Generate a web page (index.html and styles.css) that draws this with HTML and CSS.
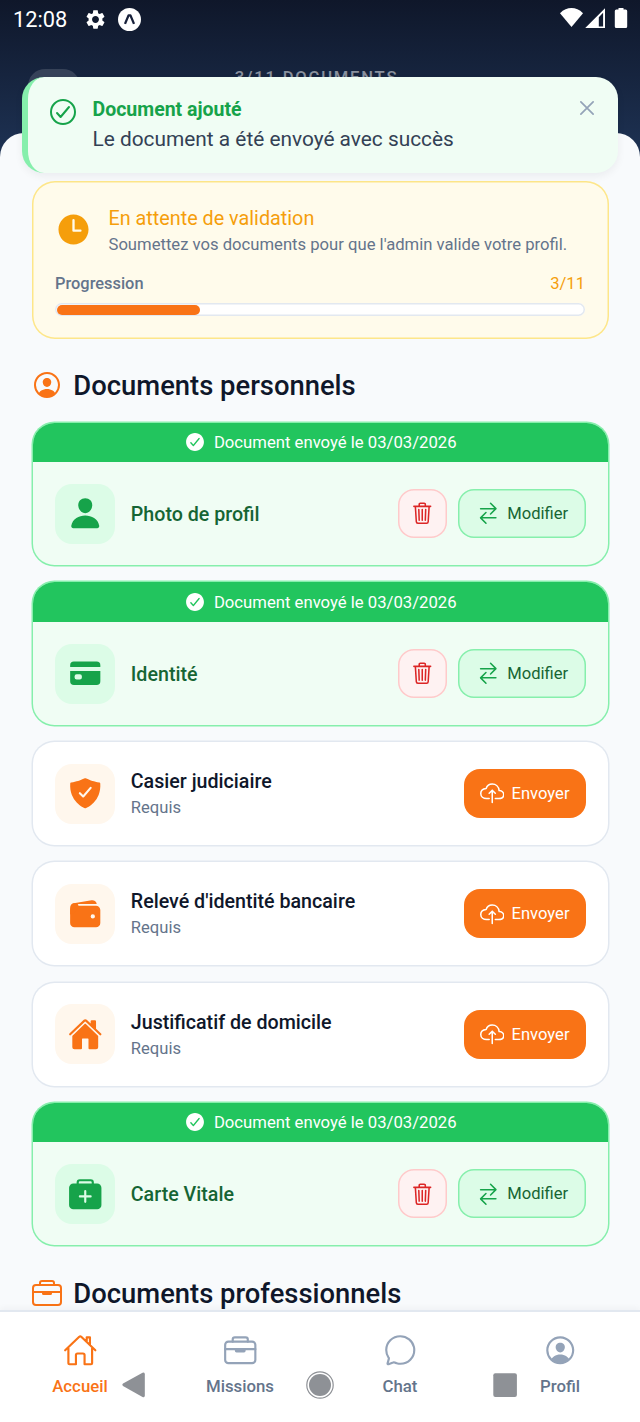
FILE: index.html
```html
<!DOCTYPE html>
<html lang="fr">
<head>
<meta charset="utf-8">
<meta name="viewport" content="width=device-width, initial-scale=1">
<title>Documents</title>
<link rel="stylesheet" href="styles.css">
</head>
<body>
<svg class="sprite" aria-hidden="true">
  <symbol id="check-outline" viewBox="0 0 512 512"><path class="line" d="M448 256c0-106-86-192-192-192S64 150 64 256s86 192 192 192 192-86 192-192zM352 176L217.600 336 160 272"/></symbol>
  <symbol id="close" viewBox="0 0 512 512"><path class="line" d="M368 368L144 144M368 144L144 368"/></symbol>
  <symbol id="time" viewBox="0 0 512 512"><path d="M256 48C141.130 48 48 141.130 48 256s93.130 208 208 208 208-93.130 208-208S370.870 48 256 48zm96 240h-96a16 16 0 01-16-16V128a16 16 0 0132 0v128h80a16 16 0 010 32z"/></symbol>
  <symbol id="person-circle" viewBox="0 0 512 512"><path d="M258.900 48C141.920 46.420 46.420 141.920 48 258.900c1.560 112.190 92.910 203.540 205.100 205.100 117 1.600 212.480-93.900 210.880-210.880C462.440 140.910 371.090 49.560 258.900 48zM385.320 375.250a4 4 0 01-6.140-.32 124.270 124.270 0 00-32.350-29.590C321.370 329 289.110 320 256 320s-65.370 9-90.830 25.340a124.240 124.240 0 00-32.350 29.580 4 4 0 01-6.140.32A175.320 175.320 0 0180 259c-1.630-97.310 78.220-178.760 175.570-179S432 158.810 432 256a175.320 175.320 0 01-46.680 119.250z"/><path d="M256 144c-19.720 0-37.550 7.390-50.220 20.820s-19 32-17.570 51.930C191.110 256 221.520 288 256 288s64.830-32 67.790-71.240c1.480-19.740-4.800-38.140-17.680-51.820C293.390 151.440 275.590 144 256 144z"/></symbol>
  <symbol id="check-circle" viewBox="0 0 512 512"><path d="M256 48C141.310 48 48 141.310 48 256s93.310 208 208 208 208-93.310 208-208S370.690 48 256 48zm108.250 138.290l-134.400 160a16 16 0 01-12 5.710h-.27a16 16 0 01-11.890-5.300l-57.600-64a16 16 0 1123.780-21.400l45.290 50.320 122.590-145.910a16 16 0 0124.500 20.580z"/></symbol>
  <symbol id="person" viewBox="0 0 512 512"><path d="M332.640 64.580C313.180 43.570 286 32 256 32c-30.160 0-57.430 11.500-76.800 32.380-19.580 21.110-29.120 49.800-26.880 80.780C156.760 206.280 203.270 256 256 256s99.160-49.710 103.670-110.820c2.270-30.700-7.330-59.330-27.030-80.600zM432 480H80a31 31 0 01-24.200-11.130c-6.500-7.770-9.120-18.380-7.180-29.110C57.060 392.940 83.400 353.610 124.800 326c36.780-24.510 83.370-38 131.200-38s94.420 13.500 131.200 38c41.400 27.600 67.740 66.930 76.180 113.750 1.940 10.730-.68 21.340-7.180 29.110A31 31 0 01432 480z"/></symbol>
  <symbol id="card" viewBox="0 0 512 512"><path d="M32 376a56 56 0 0056 56h336a56 56 0 0056-56V222H32zm66-76a30 30 0 0130-30h48a30 30 0 0130 30v20a30 30 0 01-30 30h-48a30 30 0 01-30-30zM424 80H88a56 56 0 00-56 56v26h448v-26a56 56 0 00-56-56z"/></symbol>
  <symbol id="shield" viewBox="0 0 512 512"><path d="M479.070 111.360a16 16 0 00-13.150-14.740c-86.500-15.520-122.610-26.740-203.330-63.200a16 16 0 00-13.180 0C168.690 69.880 132.580 81.100 46.080 96.620a16 16 0 00-13.150 14.740c-3.850 61.110 4.360 118.050 24.430 169.240A349.470 349.470 0 00129 393.110c53.470 56.730 110.240 81.370 121.070 85.730a16 16 0 0012 0c10.830-4.360 67.600-29 121.070-85.730A349.470 349.470 0 00454.640 280.600c20.070-51.190 28.280-108.130 24.430-169.240zm-131 75.110l-110.800 128a16 16 0 01-11.410 5.530h-.66a16 16 0 01-11.200-4.570l-49.200-48.200a16 16 0 1122.400-22.860l37 36.290 99.700-115.130a16 16 0 0124.170 20.940z"/></symbol>
  <symbol id="wallet" viewBox="0 0 512 512"><path d="M95.500 104h320a87.730 87.730 0 0111.180.71 66 66 0 00-77.510-55.560L86 94.080h-.3a66 66 0 00-41.070 26.130A87.570 87.570 0 0195.500 104zM415.500 128h-320a64.070 64.070 0 00-64 64v192a64.070 64.070 0 0064 64h320a64.070 64.070 0 0064-64V192a64.070 64.070 0 00-64-64zM368 320a32 32 0 1132-32 32 32 0 01-32 32z"/><path d="M32 259.500V160c0-21.670 12-58 53.650-65.870C121 87.500 156 87.500 156 87.500s23 16 4 16-18.500 24.500 0 24.500 0 23.500 0 23.500L85.500 236z"/></symbol>
  <symbol id="home" viewBox="0 0 512 512"><path d="M261.560 101.280a8 8 0 00-11.060 0L66.400 277.150a8 8 0 00-2.470 5.790L63.900 448a32 32 0 0032 32H192a16 16 0 0016-16V328a8 8 0 018-8h80a8 8 0 018 8v136a16 16 0 0016 16h96.060a32 32 0 0032-32V282.940a8 8 0 00-2.470-5.790z"/><path d="M490.910 244.150l-74.800-71.560V64a16 16 0 00-16-16h-48a16 16 0 00-16 16v32l-57.920-55.380C272.770 35.140 264.710 32 256 32c-8.680 0-16.720 3.140-22.140 8.630l-212.700 203.500c-6.220 6-7 15.870-1.340 22.370A16 16 0 0043 267.560L250.500 69.280a8 8 0 0111.060 0l207.520 198.280a16 16 0 0022.590-.44c6.140-6.360 5.630-16.860-.76-22.970z"/></symbol>
  <symbol id="medkit" viewBox="0 0 512 512"><rect x="16" y="96" width="480" height="384" rx="64"/><path class="line" d="M144 112V80a32 32 0 0132-32h160a32 32 0 0132 32v32"/><path class="line plus" d="M256 208v160M336 288H176"/></symbol>
  <symbol id="trash" viewBox="0 0 512 512"><path class="line" d="M112 112l20 320c.95 18.490 14.400 32 32 32h184c18 0 30.870-13.510 32-32l20-320M80 112h352M192 112V72a23.930 23.930 0 0124-24h80a23.930 23.930 0 0124 24v40M256 176v224M184 176l8 224M328 176l-8 224"/></symbol>
  <symbol id="swap" viewBox="0 0 512 512"><path class="line" d="M304 48l112 112-112 112M398.870 160H96M208 464L96 352l112-112M114 352h302"/></symbol>
  <symbol id="upload" viewBox="0 0 512 512"><path class="line" d="M320 367.790h76c55 0 100-29.210 100-83.600s-53-81.470-96-83.600c-8.890-85.060-71-136.800-144-136.800-69 0-113.440 45.790-128 91.200-60 5.700-112 43.880-112 106.400s54 106.400 120 106.400h56M320 255.790l-64-64-64 64M256 448.210V207.790"/></symbol>
  <symbol id="home-outline" viewBox="0 0 512 512"><path class="line" d="M80 212v236a16 16 0 0016 16h96V328a24 24 0 0124-24h80a24 24 0 0124 24v136h96a16 16 0 0016-16V212M480 256L266.890 52c-5-5.280-16.690-5.340-21.780 0L32 256M400 179V64h-48v69"/></symbol>
  <symbol id="briefcase" viewBox="0 0 512 512"><rect class="line" x="32" y="128" width="448" height="320" rx="48"/><path class="line" d="M144 128V96a32 32 0 0132-32h160a32 32 0 0132 32v32M480 240H32"/><path class="line clasp" d="M320 240v24a8 8 0 01-8 8H200a8 8 0 01-8-8v-24"/></symbol>
  <symbol id="chat" viewBox="0 0 512 512"><path class="line" d="M87.490 380c1.190-4.380-1.440-10.470-3.950-14.860a44.860 44.860 0 00-2.540-3.800 199.810 199.810 0 01-33-110C47.650 139.090 140.730 48 255.830 48 356.210 48 440 117.540 459.580 209.850a199 199 0 014.420 41.640c0 112.410-89.490 204.930-204.590 204.930-18.300 0-43-4.600-56.470-8.370s-26.920-8.770-30.390-10.110a31.090 31.090 0 00-11.120-2.070 30.710 30.710 0 00-12.090 2.430l-67.830 24.480a16 16 0 01-4.670 1.220 9.600 9.600 0 01-9.570-9.740 15.850 15.850 0 01.6-3.290z"/></symbol>
  <symbol id="gear" viewBox="0 0 24 24"><path d="M19.140 12.940c.04-.3.06-.61.06-.94 0-.32-.02-.64-.07-.94l2.030-1.580c.18-.14.23-.41.12-.61l-1.920-3.320c-.12-.22-.37-.29-.59-.22l-2.390.96c-.5-.38-1.030-.7-1.620-.94l-.36-2.540c-.04-.24-.24-.41-.48-.41h-3.840c-.24 0-.43.17-.47.41l-.36 2.540c-.59.24-1.130.57-1.620.94l-2.390-.96c-.22-.08-.47 0-.59.22L2.740 8.870c-.12.21-.08.47.12.61l2.030 1.580c-.05.3-.09.63-.09.94s.02.64.07.94l-2.030 1.580c-.18.14-.23.41-.12.61l1.920 3.320c.12.22.37.29.59.22l2.390-.96c.5.38 1.030.7 1.620.94l.36 2.540c.05.24.24.41.48.41h3.840c.24 0 .44-.17.47-.41l.36-2.540c.59-.24 1.130-.56 1.620-.94l2.390.96c.22.08.47 0 .59-.22l1.920-3.320c.12-.22.07-.47-.12-.61l-2.010-1.580zM12 15.600c-1.980 0-3.600-1.620-3.600-3.600s1.620-3.600 3.600-3.600 3.600 1.620 3.600 3.600-1.620 3.600-3.600 3.600z"/></symbol>
</svg>

<div class="screen">
  <header class="hero">
    <div class="status">
      <span class="clock">12:08</span>
      <svg class="s-gear"><use href="#gear"/></svg>
      <svg class="s-app" viewBox="0 0 24 24"><circle cx="12" cy="12" r="12"/><path d="M7.300 16.600L11 7.700h2l3.700 8.900" /></svg>
      <svg class="s-signal" viewBox="0 0 68 22"><path d="M0 5.200C7-1.600 16-1.600 23 5.200L11.500 19z"/><path fill-rule="evenodd" d="M45 .2V20H25.200zM38.800 9.200V18.400h4.300V4.800z"/><path d="M58.500 0h5v1.500h2.200q1.500 0 1.500 1.500v15.600q0 1.500-1.500 1.500h-9.400q-1.500 0-1.500-1.500V3q0-1.500 1.500-1.500h2.200z"/></svg>
    </div>
    <div class="hero-bar">
      <span class="back"></span>
      <span class="count">3/11 DOCUMENTS</span>
      <span class="spacer"></span>
    </div>
  </header>

  <main class="sheet">
    <section class="notice">
      <div class="notice-head">
        <svg class="i-time"><use href="#time"/></svg>
        <div>
          <h2 class="notice-title">En attente de validation</h2>
          <p class="notice-text">Soumettez vos documents pour que l'admin valide votre profil.</p>
        </div>
      </div>
      <div class="progress-row"><span class="progress-label">Progression</span><span class="progress-value">3/11</span></div>
      <div class="track"><div class="fill" style="width:27.27%"></div></div>
    </section>

    <h1 class="section-title"><svg class="i-head"><use href="#person-circle"/></svg>Documents personnels</h1>

    <div class="list">
      <article class="doc done">
        <div class="band"><svg class="i-band"><use href="#check-circle"/></svg>Document envoyé le 03/03/2026</div>
        <div class="row">
          <span class="tile"><svg class="i-tile"><use href="#person"/></svg></span>
          <div class="info"><h3 class="name">Photo de profil</h3></div>
          <button class="btn delete" aria-label="Supprimer"><svg class="i-btn"><use href="#trash"/></svg></button>
          <button class="btn edit"><svg class="i-btn"><use href="#swap"/></svg>Modifier</button>
        </div>
      </article>
      <article class="doc done">
        <div class="band"><svg class="i-band"><use href="#check-circle"/></svg>Document envoyé le 03/03/2026</div>
        <div class="row">
          <span class="tile"><svg class="i-tile"><use href="#card"/></svg></span>
          <div class="info"><h3 class="name">Identité</h3></div>
          <button class="btn delete" aria-label="Supprimer"><svg class="i-btn"><use href="#trash"/></svg></button>
          <button class="btn edit"><svg class="i-btn"><use href="#swap"/></svg>Modifier</button>
        </div>
      </article>
      <article class="doc">
        <div class="row">
          <span class="tile"><svg class="i-tile"><use href="#shield"/></svg></span>
          <div class="info"><h3 class="name">Casier judiciaire</h3><p class="need">Requis</p></div>
          <button class="btn send"><svg class="i-btn"><use href="#upload"/></svg>Envoyer</button>
        </div>
      </article>
      <article class="doc">
        <div class="row">
          <span class="tile"><svg class="i-tile"><use href="#wallet"/></svg></span>
          <div class="info"><h3 class="name">Relevé d'identité bancaire</h3><p class="need">Requis</p></div>
          <button class="btn send"><svg class="i-btn"><use href="#upload"/></svg>Envoyer</button>
        </div>
      </article>
      <article class="doc">
        <div class="row">
          <span class="tile"><svg class="i-tile"><use href="#home"/></svg></span>
          <div class="info"><h3 class="name">Justificatif de domicile</h3><p class="need">Requis</p></div>
          <button class="btn send"><svg class="i-btn"><use href="#upload"/></svg>Envoyer</button>
        </div>
      </article>
      <article class="doc done">
        <div class="band"><svg class="i-band"><use href="#check-circle"/></svg>Document envoyé le 03/03/2026</div>
        <div class="row">
          <span class="tile"><svg class="i-tile"><use href="#medkit"/></svg></span>
          <div class="info"><h3 class="name">Carte Vitale</h3></div>
          <button class="btn delete" aria-label="Supprimer"><svg class="i-btn"><use href="#trash"/></svg></button>
          <button class="btn edit"><svg class="i-btn"><use href="#swap"/></svg>Modifier</button>
        </div>
      </article>
    </div>

    <h1 class="section-title"><svg class="i-head"><use href="#briefcase"/></svg>Documents professionnels</h1>
  </main>

  <nav class="tabs">
    <a class="tab active"><svg class="i-tab"><use href="#home-outline"/></svg>Accueil</a>
    <a class="tab"><svg class="i-tab"><use href="#briefcase"/></svg>Missions</a>
    <a class="tab"><svg class="i-tab"><use href="#chat"/></svg>Chat</a>
    <a class="tab"><svg class="i-tab"><use href="#person-circle"/></svg>Profil</a>
  </nav>

  <!-- System navigation keys drawn over the tab bar -->
  <div class="keys">
    <svg class="key" viewBox="0 0 30 30"><path d="M4 13.500Q2.500 14.800 4 16.100L23.500 27Q25.800 28 25.800 25.500V4.200Q25.800 1.700 23.500 2.800z"/></svg>
    <svg class="key" viewBox="0 0 30 30"><circle class="ring" cx="15" cy="15" r="13.200"/><circle cx="15" cy="15" r="11"/></svg>
    <svg class="key" viewBox="0 0 30 30"><rect x="3.300" y="3.300" width="23.600" height="23.600" rx="2"/></svg>
  </div>

  <div class="toast" role="status">
    <svg class="i-toast"><use href="#check-outline"/></svg>
    <div class="toast-body">
      <strong class="toast-title">Document ajouté</strong>
      <p class="toast-text">Le document a été envoyé avec succès</p>
    </div>
    <svg class="i-close"><use href="#close"/></svg>
  </div>
</div>
</body>
</html>
```
FILE: styles.css
```css
* { box-sizing: border-box; margin: 0; }

body {
  background: #f8fafc;
  font-family: Roboto, "Noto Sans", sans-serif;
  font-size: 16.6px;
  color: #0f172a;
}

svg { display: block; flex: none; fill: currentColor; }
.sprite { position: absolute; width: 0; height: 0; }
.line {
  fill: none;
  stroke: currentColor;
  stroke-width: 32;
  stroke-linecap: round;
  stroke-linejoin: round;
}
.plus { stroke: #dcfce7; }
.clasp { fill: currentColor; }

.screen {
  position: relative;
  display: flex;
  flex-direction: column;
  width: 640px;
  height: 1422px;
  overflow: hidden;
}

/* Header */
.hero {
  flex: none;
  height: 160px;
  background: linear-gradient(#0f172a, #1e3355);
  color: #fff;
}
.status {
  display: flex;
  align-items: center;
  height: 38px;
  padding: 0 12px 0 13px;
}
.clock { width: 71px; font-size: 21.8px; }
.s-gear { width: 23px; height: 23px; }
.s-app { width: 23px; height: 23px; margin-left: 11px; }
.s-app path { fill: none; stroke: #17203a; stroke-width: 2.4; stroke-linejoin: round; }
.s-signal { width: 68px; height: 22px; margin-left: auto; }
.hero-bar {
  display: flex;
  justify-content: space-between;
  padding: 31px 31px 0 28px;
}
.back, .spacer { width: 52px; height: 52px; }
.spacer { width: 56px; }
.back { border-radius: 17px; background: rgba(255, 255, 255, .14); }
.count { font-weight: 500; letter-spacing: 1.8px; line-height: 17px; color: rgba(255, 255, 255, .5); }

/* Content sheet */
.sheet {
  flex: 1;
  min-height: 0;
  margin-top: -27px;
  padding: 48px 31.5px 0;
  overflow: hidden;
  border-radius: 24px 24px 0 0;
  background: #f8fafc;
}

.notice {
  height: 158px;
  padding: 25px 23.5px 0;
  border-radius: 23px;
  background: #fffbeb;
  box-shadow: inset 0 0 0 1.5px #fde68a;
}
.notice-head { display: flex; align-items: center; gap: 16.5px; color: #f59e0b; }
.i-time { width: 37px; height: 37px; margin-bottom: 6px; }
.notice-title { font-size: 19.8px; font-weight: 400; line-height: 26px; }
.notice-text { font-size: 16.65px; line-height: 26px; color: #64748b; white-space: nowrap; }
.progress-row { display: flex; justify-content: space-between; margin-top: 13px; line-height: 26px; }
.progress-label { font-size: 16.4px; font-weight: 500; color: #64748b; }
.progress-value { color: #f59e0b; }
.track {
  height: 13px;
  margin-top: 6px;
  padding: 1.5px;
  border-radius: 7px;
  background: #fff;
  box-shadow: inset 0 0 0 1.5px #e2e8f0;
}
.fill { height: 10px; border-radius: 5px; background: #f97316; }

.section-title {
  display: flex;
  align-items: center;
  gap: 10.5px;
  margin-top: 32px;
  font-size: 27.4px;
  font-weight: 500;
  line-height: 30px;
  white-space: nowrap;
}
.i-head { width: 32px; height: 32px; margin: -2px 0 0 -.7px; color: #f97316; }

/* Document cards: the outline is a spread shadow so the band never covers it */
.list { display: flex; flex-direction: column; gap: 17.3px; margin-top: 20px; padding: 1.7px 1px 1.5px 1.5px; }
.doc {
  overflow: hidden;
  border-radius: 21.5px;
  background: #fff;
  box-shadow: 0 0 0 1.5px #e2e8f0;
}
.done { background: #f0fdf4; box-shadow: 0 0 0 1.5px #86efac; }
.band {
  display: flex;
  align-items: center;
  justify-content: center;
  gap: 8px;
  height: 39.6px;
  background: #22c55e;
  color: #fff;
  font-size: 16.7px;
}
.i-band { width: 22px; height: 22px; margin-top: -1px; }
.row { display: flex; align-items: center; height: 102.9px; padding: 0 21.5px 0 22px; }
.tile {
  display: grid;
  place-items: center;
  width: 60px;
  height: 60px;
  border-radius: 17px;
  background: #fff7ed;
  color: #f97316;
}
.done .tile { background: #dcfce7; color: #16a34a; }
.i-tile { width: 34.5px; height: 34.5px; }
.info { flex: 1; padding: 2px 0 0 15.8px; }
.name { font-size: 19.65px; font-weight: 500; line-height: 27px; white-space: nowrap; }
.done .name { color: #166534; }
.need { line-height: 26px; color: #64748b; }

.btn {
  display: flex;
  align-items: center;
  justify-content: center;
  gap: 7px;
  height: 49px;
  padding: 0;
  border: 0;
  border-radius: 16px;
  font: 400 16.6px Roboto, "Noto Sans", sans-serif;
}
.i-btn { width: 24.5px; height: 24.5px; }
.send { width: 122.5px; background: #f97316; color: #fff; }
.delete { width: 49px; margin-right: 11px; background: #fef2f2; box-shadow: inset 0 0 0 1.5px #fecaca; color: #dc2626; }
.edit { width: 128px; background: #dcfce7; box-shadow: inset 0 0 0 1.5px #86efac; color: #166534; }
.edit .i-btn { color: #16a34a; }

/* Bottom tabs */
.tabs {
  display: flex;
  flex: none;
  height: 112px;
  padding-top: 21px;
  border-top: 2px solid #e2e8f0;
  background: #fff;
  box-shadow: 0 -2px 6px rgba(15, 23, 42, .04);
  z-index: 1;
}
.tab {
  display: flex;
  flex: 1;
  flex-direction: column;
  align-items: center;
  gap: 8px;
  font-size: 16.8px;
  font-weight: 500;
  line-height: 20px;
  color: #64748b;
}
.i-tab { width: 34.5px; height: 34.5px; color: #94a3b8; }
.active, .active .i-tab { color: #f97316; }

.keys {
  position: absolute;
  z-index: 2;
  left: 119px;
  top: 1370px;
  display: flex;
  gap: 155px;
  color: #8e9196;
}
.key { width: 30px; height: 30px; }
.key:nth-child(2) { margin-left: 1px; }
.ring { fill: #fff; stroke: currentColor; stroke-width: 1.2; }

/* Toast over the header */
.toast {
  position: absolute;
  z-index: 3;
  left: 22px;
  top: 77px;
  display: flex;
  width: 596px;
  height: 96px;
  padding: 18px 17.5px 0 18.5px;
  border-left: 6px solid #86efac;
  border-radius: 22px;
  background: #f0fdf4;
  box-shadow: 0 3px 9px rgba(15, 23, 42, .06);
}
.i-toast { width: 32px; height: 32px; margin: 1px 14px 0 0; color: #16a34a; }
.toast-body { flex: 1; }
.toast-title { display: block; font-size: 19.5px; font-weight: 700; line-height: 29px; color: #16a34a; }
.toast-text { font-size: 20.85px; line-height: 30px; color: #334155; }
.i-close { width: 28px; height: 28px; margin-top: -1px; color: #94a3b8; }
```
